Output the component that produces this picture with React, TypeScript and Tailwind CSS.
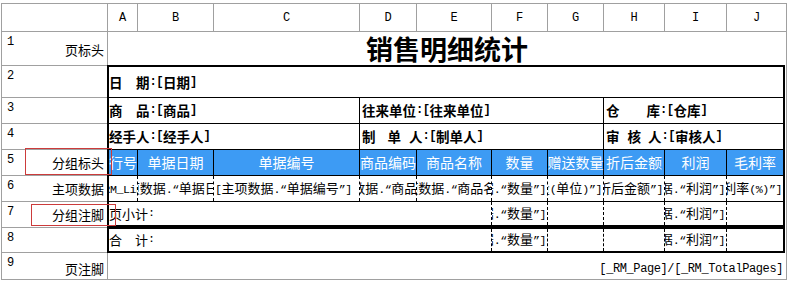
import React from "react";

function Mix({ text }: { text: string }) {
  const runs: { s: string; latin: boolean }[] = [];
  for (const ch of Array.from(text)) {
    const latin = /[\x21-\x7e“”]/.test(ch);
    const last = runs[runs.length - 1];
    if (last && last.latin === latin) last.s += ch;
    else runs.push({ s: ch, latin });
  }
  return (
    <>
      {runs.map((r, i) =>
        r.latin ? (
          <span key={i} className="font-['Liberation_Mono',monospace] text-[0.9em] tracking-[-0.04em]">
            {r.s}
          </span>
        ) : (
          <span key={i}>{r.s}</span>
        )
      )}
    </>
  );
}

const headerCols: [string, string][] = [
  ["w-[106px] border-r", ""],
  ["w-[30px] border-r", "A"],
  ["w-[76px] border-r", "B"],
  ["w-[146px] border-r", "C"],
  ["w-[57px] border-r", "D"],
  ["w-[75px] border-r", "E"],
  ["w-[56px] border-r", "F"],
  ["w-[56px] border-r", "G"],
  ["w-[61px] border-r", "H"],
  ["w-[62px] border-r", "I"],
  ["flex-1", "J"],
];

const labels: { h: string; n: string; t: string; extra?: string }[] = [
  { h: "h-[34px] border-b", n: "1", t: "页标头", extra: "mt-[2px]" },
  { h: "h-[32px] border-b", n: "2", t: "" },
  { h: "h-[26px] border-b", n: "3", t: "" },
  { h: "h-[26px] border-b", n: "4", t: "" },
  { h: "h-[26px] border-b", n: "5", t: "分组标头" },
  { h: "h-[26px] border-b", n: "6", t: "主项数据" },
  { h: "h-[26px] border-b", n: "7", t: "分组注脚" },
  { h: "h-[25px] border-b", n: "8", t: "" },
  { h: "h-[26px]", n: "9", t: "页注脚", extra: "mt-[6px]" },
];

const blueHeads: [string, string][] = [
  ["w-[29px] border-r", "行号"],
  ["w-[76px] border-r", "单据日期"],
  ["w-[146px] border-r", "单据编号"],
  ["w-[57px] border-r", "商品编码"],
  ["w-[75px] border-r", "商品名称"],
  ["w-[56px] border-r", "数量"],
  ["w-[56px] border-r", "赠送数量"],
  ["w-[61px] border-r", "折后金额"],
  ["w-[62px] border-r", "利润"],
  ["flex-1", "毛利率"],
];

const dataCells: [string, string][] = [
  ["w-[29px] border-r justify-center", "[_RM_Line]"],
  ["w-[76px] border-r justify-center", "[主项数据.“单据日期”]"],
  ["w-[146px] border-r justify-start pl-[1px]", "[主项数据.“单据编号”]"],
  ["w-[57px] border-r justify-center", "[主项数据.“商品编码”]"],
  ["w-[75px] border-r justify-center", "[主项数据.“商品名称”]"],
  ["w-[56px] border-r justify-end pr-[1px]", "[主项数据.“数量”]"],
  ["w-[56px] border-r justify-end pr-[1px]", "[主项数据.“赠送数量(单位)”]"],
  ["w-[61px] border-r justify-end pr-[1px]", "[主项数据.“折后金额”]"],
  ["w-[62px] border-r justify-end pr-[1px]", "[主项数据.“利润”]"],
  ["flex-1 justify-end pr-[1px]", "[主项数据.“毛利率(%)”]"],
];

function SumRow({ label, h }: { label: string; h: string }) {
  return (
    <div className={`flex ${h}`}>
      <div className="w-[383px] h-full border-r border-dashed border-black flex items-center text-[13px] whitespace-pre">
        <Mix text={label} />
      </div>
      <div className="w-[56px] h-full border-r border-dashed border-black flex items-center justify-end pr-[1px] overflow-hidden whitespace-nowrap text-[13px]">
        <span className="shrink-0">
          <Mix text="[主项数据.“数量”]" />
        </span>
      </div>
      <div className="w-[56px] h-full border-r border-dashed border-black" />
      <div className="w-[61px] h-full border-r border-dashed border-black" />
      <div className="w-[62px] h-full border-r border-dashed border-black flex items-center justify-end pr-[1px] overflow-hidden whitespace-nowrap text-[13px]">
        <span className="shrink-0">
          <Mix text="[主项数据.“利润”]" />
        </span>
      </div>
      <div className="flex-1 h-full" />
    </div>
  );
}

export default function App() {
  return (
    <div className="relative w-[787px] h-[283px] bg-white overflow-hidden text-black font-['Noto_Sans_CJK_SC',sans-serif]">
      <div className="ml-[1px] mt-[3px] w-[786px] border border-[#a0a0a0] flex flex-col">
        {/* column letters */}
        <div className="flex h-[28px] border-b border-[#a0a0a0]">
          {headerCols.map(([c, t], i) => (
            <div
              key={i}
              className={`${c} border-[#a0a0a0] h-full flex items-center justify-center font-['Liberation_Mono',monospace] text-[12px]`}
            >
              {t}
            </div>
          ))}
        </div>
        {/* body */}
        <div className="flex">
          {/* row labels */}
          <div className="w-[105px] flex flex-col">
            {labels.map((l, i) => (
              <div key={i} className={`${l.h} border-[#a0a0a0] flex justify-between`}>
                <span className="pt-[3px] pl-[5px] font-['Liberation_Mono',monospace] text-[12px] leading-[14px]">
                  {l.n}
                </span>
                <span className={`self-center pr-[3px] text-[13px] leading-[16px] ${l.extra ?? ""}`}>{l.t}</span>
              </div>
            ))}
          </div>
          {/* content */}
          <div className="w-[679px] flex flex-col">
            {/* row 1 title */}
            <div className="h-[33px] border-l border-[#a0a0a0] flex items-center justify-center">
              <span className="text-[27px] font-bold leading-[30px] mt-[1px]">销售明细统计</span>
            </div>
            {/* report box */}
            <div className="h-[188px] w-[678px] border-2 border-black flex flex-col">
              <div className="h-[31px] border-b border-black flex items-center text-[13.5px] font-bold whitespace-pre">
                <Mix text="日　期:[日期]" />
              </div>
              <div className="h-[26px] border-b border-black flex text-[13.5px] font-bold whitespace-pre">
                <div className="w-[251px] border-r border-black flex items-center">
                  <Mix text="商　品:[商品]" />
                </div>
                <div className="w-[244px] border-r border-black flex items-center pl-[2px]">
                  <Mix text="往来单位:[往来单位]" />
                </div>
                <div className="flex-1 flex items-center pl-[2px]">
                  <Mix text="仓　　库:[仓库]" />
                </div>
              </div>
              <div className="h-[26px] border-b border-black flex text-[13.5px] font-bold whitespace-pre">
                <div className="w-[251px] border-r border-black flex items-center">
                  <Mix text="经手人:[经手人]" />
                </div>
                <div className="w-[244px] border-r border-black flex items-center pl-[2px]">
                  <span>制</span>
                  <span className="ml-[12px]">单</span>
                  <span className="ml-[8px]">人</span>
                  <Mix text=":[制单人]" />
                </div>
                <div className="flex-1 flex items-center pl-[2px]">
                  <span>审</span>
                  <span className="ml-[8px]">核</span>
                  <span className="ml-[7px]">人</span>
                  <Mix text=":[审核人]" />
                </div>
              </div>
              {/* blue header */}
              <div className="h-[26px] border-b border-black flex bg-[#3d9bf4] text-white text-[14px]">
                {blueHeads.map(([c, t], i) => (
                  <div
                    key={i}
                    className={`${c} border-black h-full flex items-center justify-center overflow-visible whitespace-nowrap`}
                  >
                    {t}
                  </div>
                ))}
              </div>
              {/* data row */}
              <div className="h-[26px] border-b border-black flex text-[13px]">
                {dataCells.map(([c, t], i) => (
                  <div
                    key={i}
                    className={`${c} border-dashed border-black h-full flex items-center overflow-hidden whitespace-nowrap`}
                  >
                    <span className="shrink-0">
                      <Mix text={t} />
                    </span>
                  </div>
                ))}
              </div>
              <SumRow label="页小计:" h="h-[27px] border-b-4 border-black" />
              <SumRow label="合　计:" h="h-[22px]" />
            </div>
            {/* row 9 */}
            <div className="h-[26px] border-l border-[#a0a0a0] flex items-center justify-end pr-[3px] pt-[6px]">
              <span className="font-['Liberation_Mono',monospace] text-[12px] tracking-[-0.4px]">
                [_RM_Page]/[_RM_TotalPages]
              </span>
            </div>
          </div>
        </div>
      </div>
      {/* red selection boxes */}
      <div className="absolute left-[25px] top-[148px] w-[87px] h-[27px] border border-[#cc3b3b]" />
      <div className="absolute left-[31px] top-[204px] w-[85px] h-[22px] border border-[#cc3b3b]" />
    </div>
  );
}
